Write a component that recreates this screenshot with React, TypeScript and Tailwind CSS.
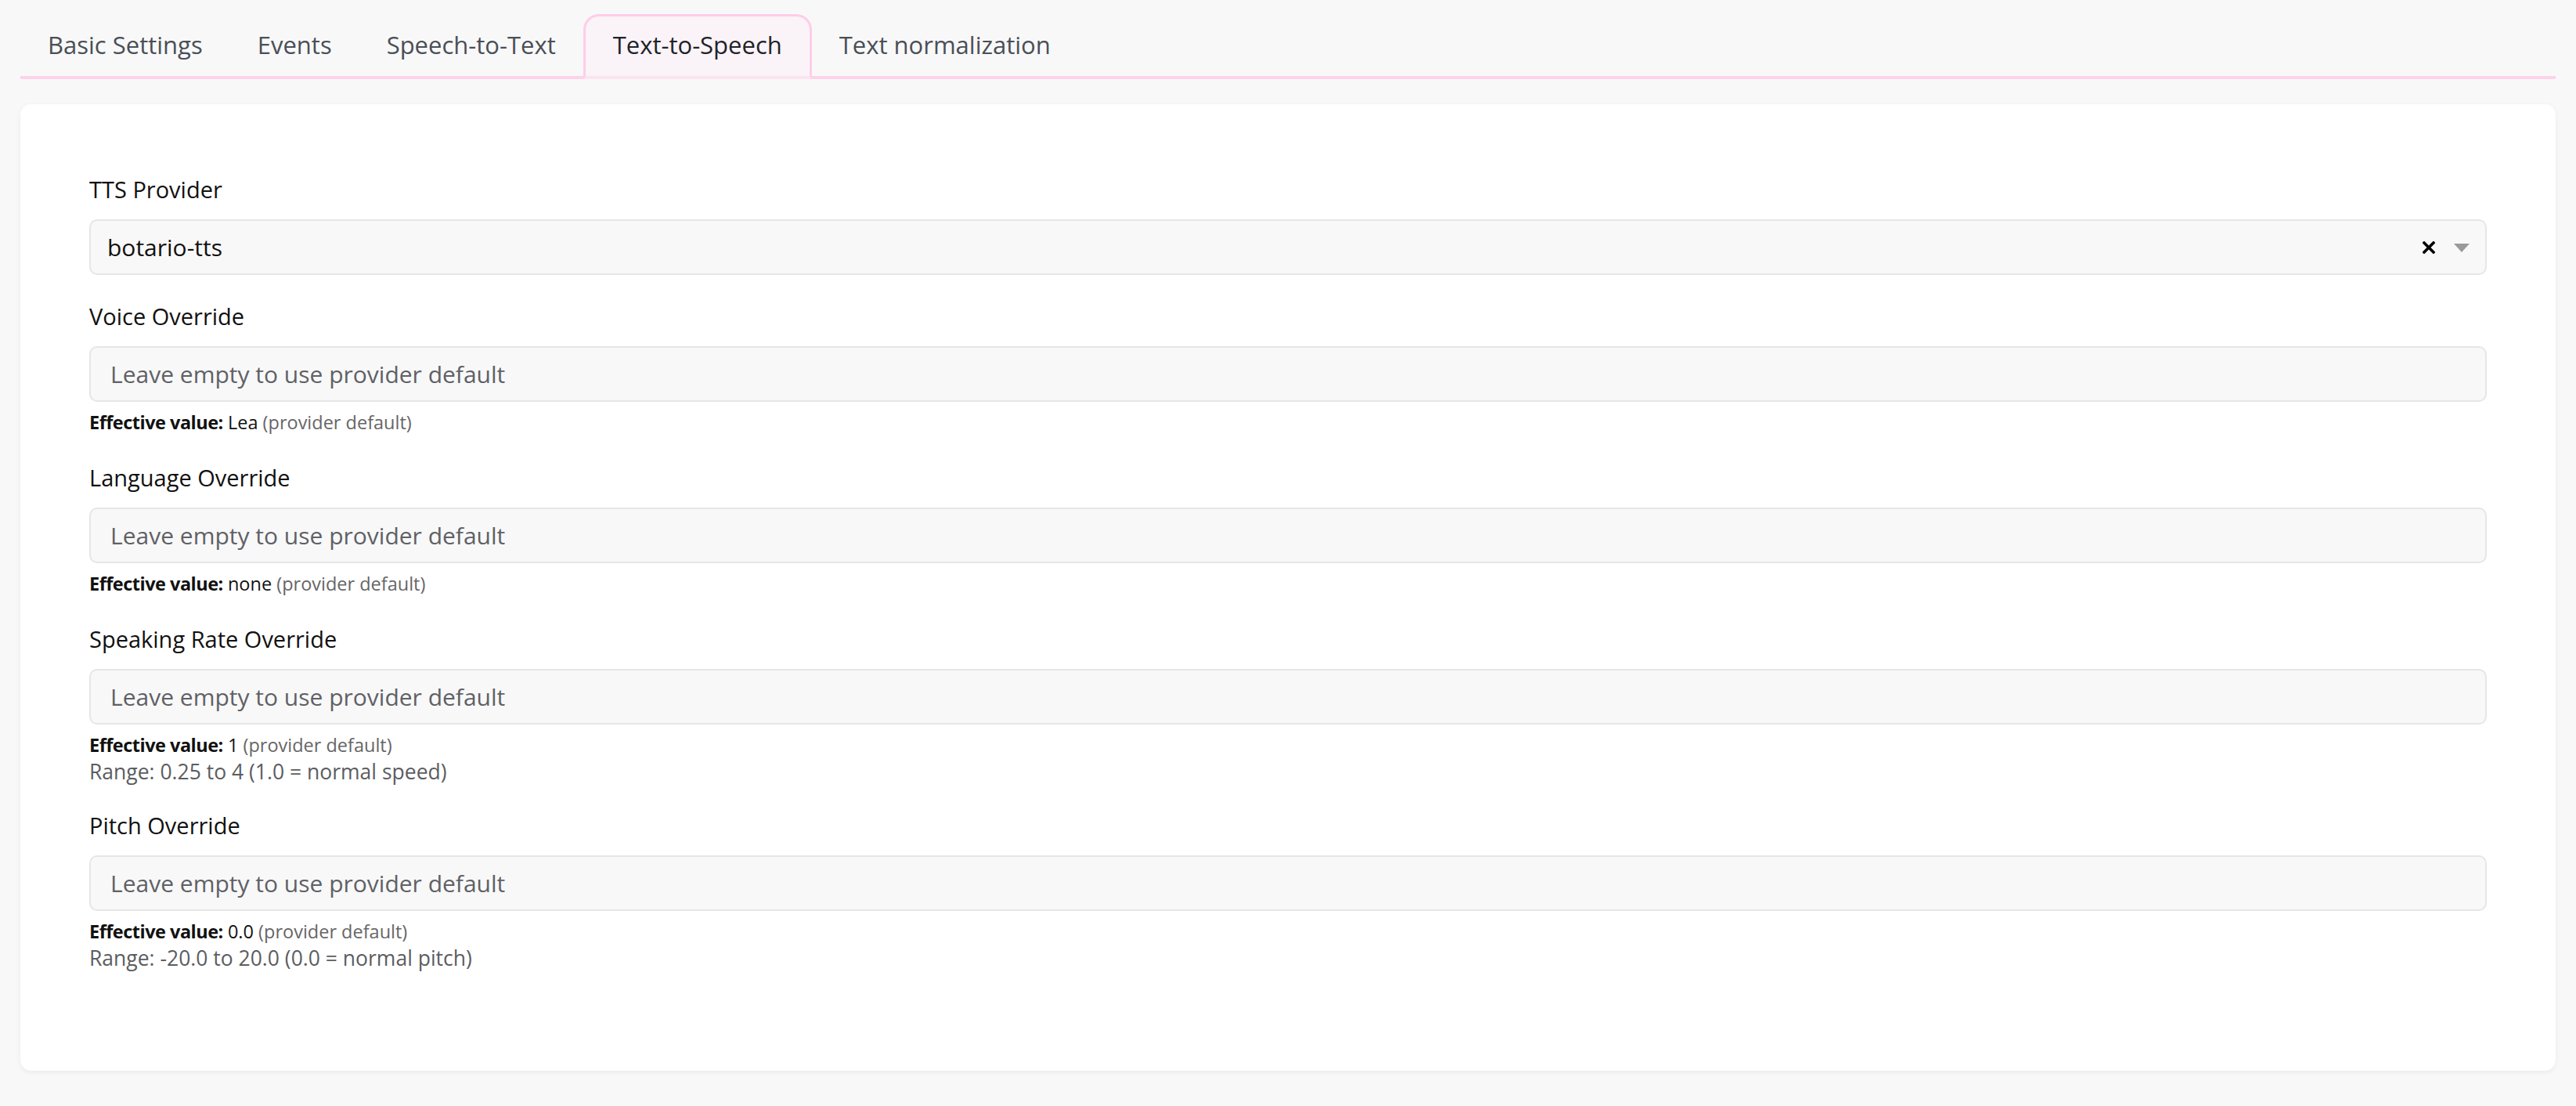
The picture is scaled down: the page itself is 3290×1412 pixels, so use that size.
import { useState } from "react";

const tabs = ["Basic Settings", "Events", "Speech-to-Text", "Text-to-Speech", "Text normalization"];

type Field = {
  label: string;
  effective: string;
  range?: string;
};

const fields: Field[] = [
  { label: "Voice Override", effective: "Lea" },
  { label: "Language Override", effective: "none" },
  { label: "Speaking Rate Override", effective: "1", range: "Range: 0.25 to 4 (1.0 = normal speed)" },
  { label: "Pitch Override", effective: "0.0", range: "Range: -20.0 to 20.0 (0.0 = normal pitch)" },
];

function OverrideField({ f }: { f: Field }) {
  const [value, setValue] = useState("");
  return (
    <div className="flex flex-col">
      <label className="mb-[17px] text-[29px] leading-[42px] text-[#111]">{f.label}</label>
      <input
        value={value}
        onChange={(e) => setValue(e.target.value)}
        placeholder="Leave empty to use provider default"
        className="h-[71px] w-full rounded-[10px] border-2 border-[#e6e6e6] bg-[#f8f8f8] px-[25px] text-[30px] text-[#111] outline-none placeholder:text-[#5f6166]"
      />
      <div className="mt-[8px] text-[23.5px] leading-[36px] text-[#111]">
        <span className="font-bold tracking-[-0.5px]">Effective value:</span> {f.effective}{" "}
        <span className="text-[#666]">(provider default)</span>
      </div>
      {f.range && <div className="text-[26.5px] leading-[32px] text-[#5b5d61]">{f.range}</div>}
    </div>
  );
}

export default function App() {
  const [active, setActive] = useState("Text-to-Speech");
  const [provider, setProvider] = useState("botario-tts");

  return (
    <div className="min-h-screen bg-[#f8f8f8] px-[26px] pt-[18px] pb-[46px]" style={{ fontFamily: "'Open Sans', 'Liberation Sans', sans-serif" }}>
      <div className="flex border-b-4 border-[#fdd3e9]">
        {tabs.map((t) =>
          t === active ? (
            <button
              key={t}
              className="-mb-[4px] h-[83px] rounded-t-[20px] border-[3px] border-b-4 border-[#ffcde8] border-b-[#fbe3ef] bg-[#faf3f8] px-[35px] pb-[4px] text-[31px] text-[#1f2328]"
            >
              {t}
            </button>
          ) : (
            <button
              key={t}
              onClick={() => setActive(t)}
              className="h-[79px] border-[3px] border-transparent px-[32px] text-[31px] text-[#4a4f57]"
            >
              {t}
            </button>
          )
        )}
      </div>

      <div className="mt-[32px] rounded-[14px] bg-white px-[88px] pt-[88px] pb-[128px] shadow-[0_2px_6px_rgba(0,0,0,0.06)]">
        <div className="flex flex-col gap-[32px]">
          <div className="flex flex-col">
            <label className="mb-[17px] text-[29px] leading-[42px] text-[#111]">TTS Provider</label>
            <div className="flex h-[71px] items-center rounded-[10px] border-2 border-[#e6e6e6] bg-[#f8f8f8] pl-[21px] pr-[20px]">
              <span className="flex-1 text-[30px] text-[#111]">{provider}</span>
              <button onClick={() => setProvider("")} className="mr-[24px] flex items-center">
                <svg width="16" height="16" viewBox="0 0 16 16">
                  <path d="M2 2 L14 14 M14 2 L2 14" stroke="#000" strokeWidth="3.6" strokeLinecap="square" />
                </svg>
              </button>
              <svg width="20" height="11" viewBox="0 0 20 11" className="mt-[2px]">
                <path d="M0 0 L20 0 L10 11 Z" fill="#9a9a9a" />
              </svg>
            </div>
          </div>
          {fields.map((f) => (
            <OverrideField key={f.label} f={f} />
          ))}
        </div>
      </div>
    </div>
  );
}
